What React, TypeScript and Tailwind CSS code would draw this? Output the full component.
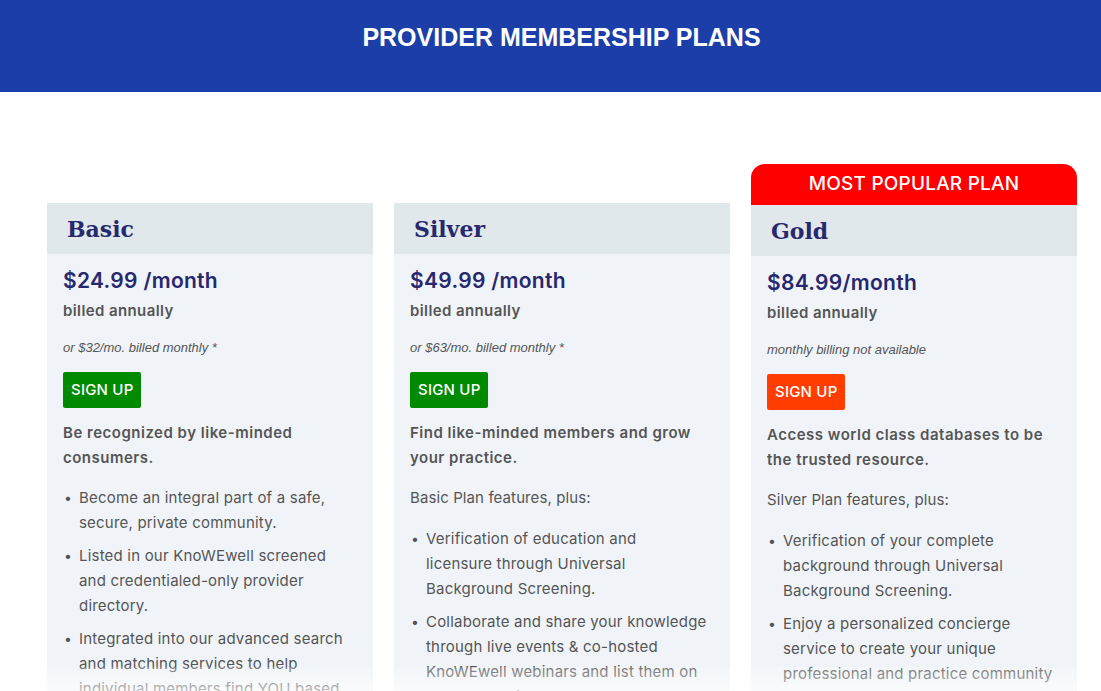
import React from "react";

type Plan = {
  name: string;
  price: string;
  note: string;
  button: string;
  lead: string;
  intro?: string;
  items: string[];
  popular?: boolean;
  width: string;
};

const plans: Plan[] = [
  {
    name: "Basic",
    price: "$24.99 /month",
    note: "or $32/mo. billed monthly *",
    button: "bg-[#008a00]",
    lead: "Be recognized by like-minded consumers.",
    items: [
      "Become an integral part of a safe, secure, private community.",
      "Listed in our KnoWEwell screened and credentialed-only provider directory.",
      "Integrated into our advanced search and matching services to help individual members find YOU based on your specialties and location.",
    ],
    width: "w-[326px]",
  },
  {
    name: "Silver",
    price: "$49.99 /month",
    note: "or $63/mo. billed monthly *",
    button: "bg-[#008a00]",
    lead: "Find like-minded members and grow your practice.",
    intro: "Basic Plan features, plus:",
    items: [
      "Verification of education and\nlicensure through Universal Background Screening.",
      "Collaborate and share your knowledge through live events & co-hosted KnoWEwell webinars and list them on the community calendar.",
    ],
    width: "w-[336px]",
  },
  {
    name: "Gold",
    price: "$84.99/month",
    note: "monthly billing not available",
    button: "bg-[#ff3d00]",
    lead: "Access world class databases to be the trusted resource.",
    intro: "Silver Plan features, plus:",
    items: [
      "Verification of your complete background through Universal Background Screening.",
      "Enjoy a personalized concierge service to create your unique professional and practice community page.",
    ],
    popular: true,
    width: "w-[326px]",
  },
];

function PlanCard({ plan }: { plan: Plan }) {
  return (
    <div className={`${plan.width} shrink-0 flex flex-col ${plan.popular ? "" : "pt-[39px]"}`}>
      {plan.popular && (
        <div className="h-[41px] bg-[#ff0000] rounded-t-[14px] flex items-center justify-center text-white text-[19px] font-medium tracking-[0.2px]">
          MOST POPULAR PLAN
        </div>
      )}
      <div className="h-[51px] bg-[#e1e8ec] flex items-center px-5">
        <h2
          className="text-[22px] font-bold text-[#28286e] pt-[2px]"
          style={{ fontFamily: '"DejaVu Serif", serif' }}
        >
          {plan.name}
        </h2>
      </div>
      <div className="bg-[#f0f4f8] px-4 pt-[12px] pb-10 text-[#555]">
        <div className="text-[21px] font-semibold text-[#28286e] leading-[30px] tracking-[0.3px]">
          {plan.price}
        </div>
        <div className="text-[15px] font-semibold leading-[30px] tracking-[0.4px]">billed annually</div>
        <div
          className="text-[13px] italic text-[#555] mt-[13px] leading-[18px]"
          style={{ fontFamily: '"Liberation Sans", Arial, sans-serif' }}
        >
          {plan.note}
        </div>
        <button
          className={`${plan.button} mt-[15px] h-[36px] px-2 rounded-[2px] text-white text-[15px] font-medium tracking-[0.2px]`}
        >
          SIGN UP
        </button>
        <p className="mt-[12px] text-[15px] font-semibold leading-[25px] tracking-[0.5px]">{plan.lead}</p>
        {plan.intro && (
          <p className="mt-[15px] text-[15px] leading-[25px] tracking-[0.1px]">{plan.intro}</p>
        )}
        <ul className={`${plan.intro ? "mt-[16px]" : "mt-[15px]"} flex flex-col gap-[8px]`}>
          {plan.items.map((item) => (
            <li key={item} className="flex text-[15px] leading-[25px] tracking-[0.2px]">
              <span className="w-[16px] shrink-0 pl-[1px] text-[14px]">•</span>
              <span className="whitespace-pre-line">{item}</span>
            </li>
          ))}
        </ul>
      </div>
    </div>
  );
}

export default function App() {
  return (
    <div
      className="relative w-[1101px] h-[691px] overflow-hidden bg-white"
      style={{ fontFamily: 'Inter, "Noto Sans", sans-serif' }}
    >
      <div className="h-[92px] bg-[#1b3ea9] flex justify-center pl-[22px] pt-[22px]">
        <h1
          className="text-white text-[25px] font-bold leading-[30px]"
          style={{ fontFamily: '"Liberation Sans", Arial, sans-serif' }}
        >
          PROVIDER MEMBERSHIP PLANS
        </h1>
      </div>
      <div className="flex gap-[21px] pl-[47px] pt-[72px]">
        {plans.map((p) => (
          <PlanCard key={p.name} plan={p} />
        ))}
      </div>
      <div className="absolute left-0 right-0 bottom-0 h-[24px] bg-gradient-to-b from-white/20 to-white/60" />
    </div>
  );
}
